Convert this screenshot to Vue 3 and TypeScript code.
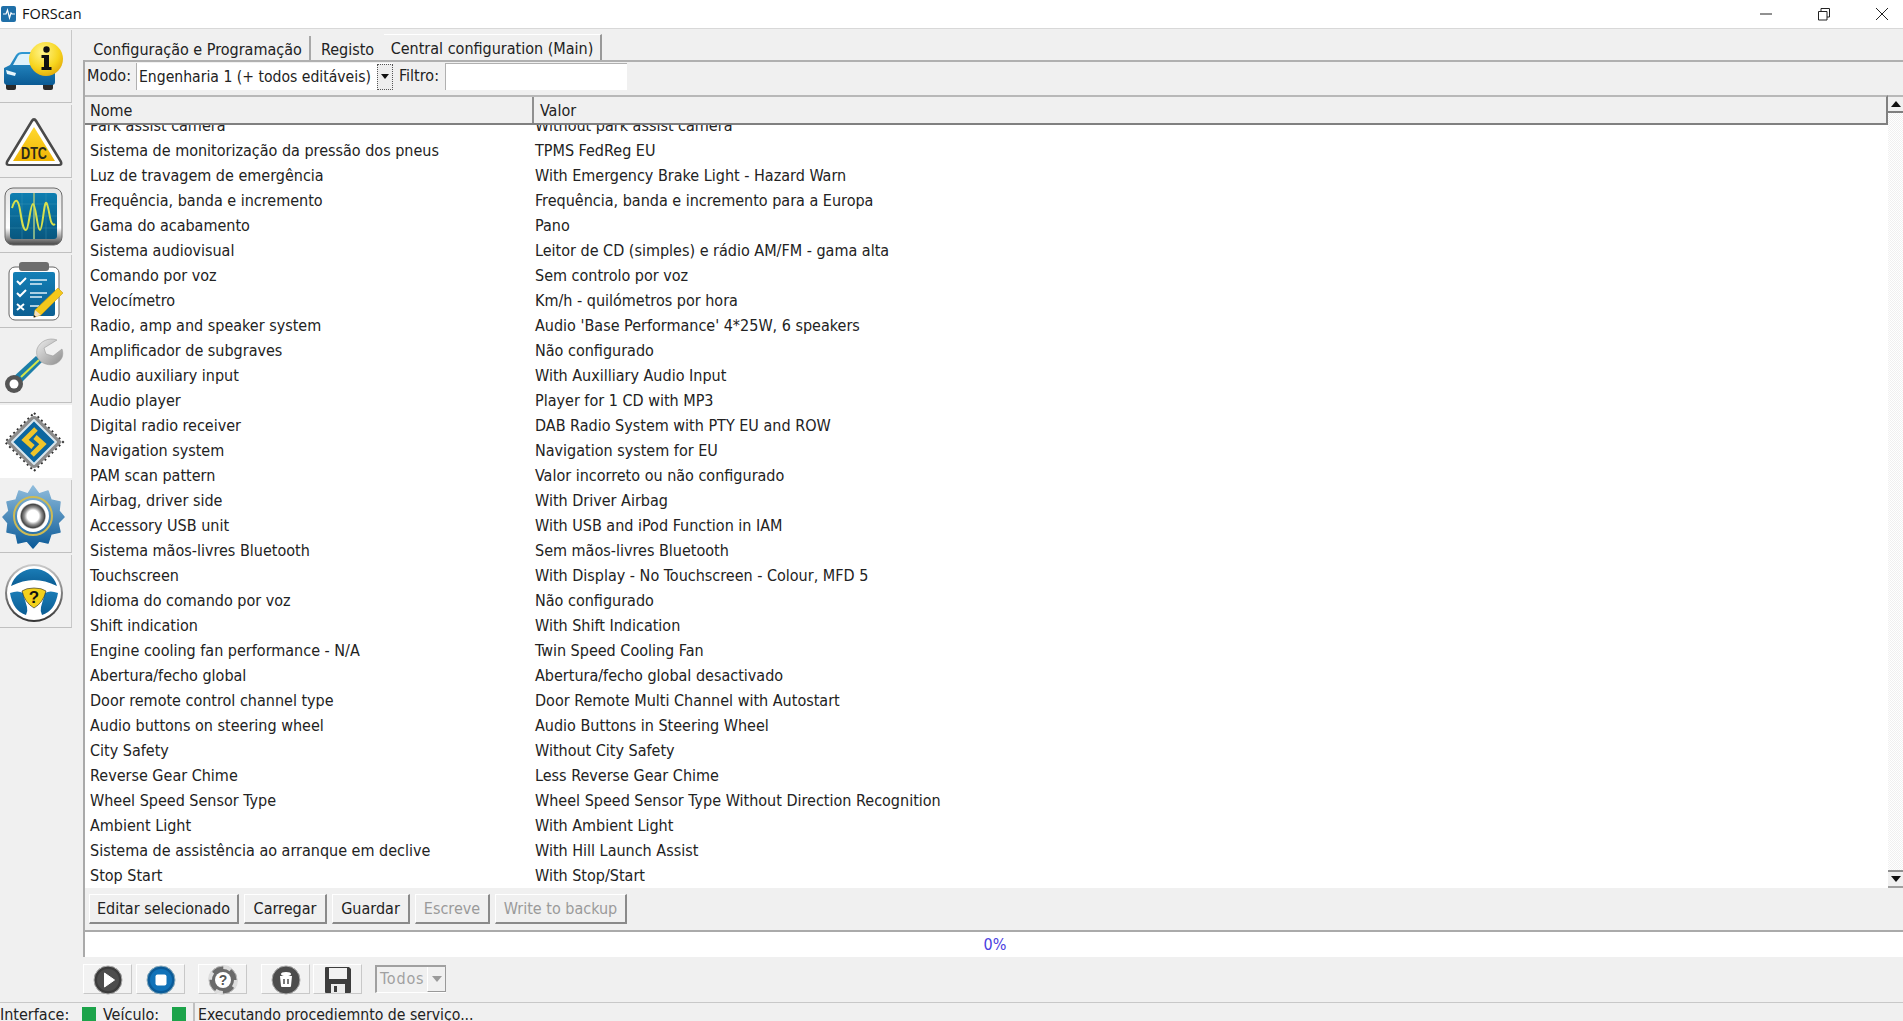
<script setup lang="ts">
interface Row { name: string; value: string }
const rows: Row[] = [
  { name: 'Park assist camera', value: 'Without park assist camera' },
  { name: 'Sistema de monitorização da pressão dos pneus', value: 'TPMS FedReg EU' },
  { name: 'Luz de travagem de emergência', value: 'With Emergency Brake Light - Hazard Warn' },
  { name: 'Frequência, banda e incremento', value: 'Frequência, banda e incremento para a Europa' },
  { name: 'Gama do acabamento', value: 'Pano' },
  { name: 'Sistema audiovisual', value: 'Leitor de CD (simples) e rádio AM/FM - gama alta' },
  { name: 'Comando por voz', value: 'Sem controlo por voz' },
  { name: 'Velocímetro', value: 'Km/h - quilómetros por hora' },
  { name: 'Radio, amp and speaker system', value: "Audio 'Base Performance' 4*25W, 6 speakers" },
  { name: 'Amplificador de subgraves', value: 'Não configurado' },
  { name: 'Audio auxiliary input', value: 'With Auxilliary Audio Input' },
  { name: 'Audio player', value: 'Player for 1 CD with MP3' },
  { name: 'Digital radio receiver', value: 'DAB Radio System with PTY EU and ROW' },
  { name: 'Navigation system', value: 'Navigation system for EU' },
  { name: 'PAM scan pattern', value: 'Valor incorreto ou não configurado' },
  { name: 'Airbag, driver side', value: 'With Driver Airbag' },
  { name: 'Accessory USB unit', value: 'With USB and iPod Function in IAM' },
  { name: 'Sistema mãos-livres Bluetooth', value: 'Sem mãos-livres Bluetooth' },
  { name: 'Touchscreen', value: 'With Display - No Touchscreen - Colour, MFD 5' },
  { name: 'Idioma do comando por voz', value: 'Não configurado' },
  { name: 'Shift indication', value: 'With Shift Indication' },
  { name: 'Engine cooling fan performance - N/A', value: 'Twin Speed Cooling Fan' },
  { name: 'Abertura/fecho global', value: 'Abertura/fecho global desactivado' },
  { name: 'Door remote control channel type', value: 'Door Remote Multi Channel with Autostart' },
  { name: 'Audio buttons on steering wheel', value: 'Audio Buttons in Steering Wheel' },
  { name: 'City Safety', value: 'Without City Safety' },
  { name: 'Reverse Gear Chime', value: 'Less Reverse Gear Chime' },
  { name: 'Wheel Speed Sensor Type', value: 'Wheel Speed Sensor Type Without Direction Recognition' },
  { name: 'Ambient Light', value: 'With Ambient Light' },
  { name: 'Sistema de assistência ao arranque em declive', value: 'With Hill Launch Assist' },
  { name: 'Stop Start', value: 'With Stop/Start' }
]
const actions = [
  { label: 'Editar selecionado', w: 150, off: false },
  { label: 'Carregar', w: 83, off: false },
  { label: 'Guardar', w: 78, off: false },
  { label: 'Escreve', w: 75, off: true },
  { label: 'Write to backup', w: 132, off: true }
]
</script>

<template>
  <div class="app">
    <header class="titlebar">
      <svg class="appicon" width="16" height="18" viewBox="0 0 16 18">
        <rect x="0" y="1" width="15" height="16" rx="2" fill="#1f6fa8" />
        <path d="M2 9h3l1.500-4 2 8 1.500-5 1 1h3" fill="none" stroke="#fff" stroke-width="1.200" />
      </svg>
      <span class="apptitle">FORScan</span>
      <div class="winctl">
        <svg width="14" height="14" viewBox="0 0 14 14"><path d="M1 7h12" stroke="#222" fill="none" /></svg>
        <svg width="14" height="14" viewBox="0 0 14 14"><path d="M1.500 4.500h8.500v8.500h-8.500zM4 4.500v-3h8.500v8.500h-2.500" stroke="#222" fill="none" /></svg>
        <svg width="14" height="14" viewBox="0 0 14 14"><path d="M1 1l12 12M13 1L1 13" stroke="#222" fill="none" /></svg>
      </div>
    </header>

    <div class="body">
      <aside class="sidebar">
        <div class="side">
          <svg width="71" height="73" viewBox="0 0 71 73">
            <defs>
              <linearGradient id="carb" x1="0" y1="0" x2="0" y2="1"><stop offset="0" stop-color="#2f9ad4" /><stop offset="1" stop-color="#0a5a94" /></linearGradient>
              <radialGradient id="infoy" cx=".4" cy=".3" r=".8"><stop offset="0" stop-color="#fff58a" /><stop offset=".6" stop-color="#f7d51e" /><stop offset="1" stop-color="#dd9f06" /></radialGradient>
            </defs>
            <rect x="6" y="50" width="10" height="10" rx="2" fill="#2a2a2a" />
            <rect x="43" y="50" width="10" height="10" rx="2" fill="#2a2a2a" />
            <path d="M4 38l6-3 6-10q2-3 6-3h16q4 0 6 3l6 10 5 3v14q0 3-3 3H8q-4 0-4-3z" fill="url(#carb)" />
            <path d="M13 35l5-9q1-2 4-2h14l6 11z" fill="#dff2fb" />
            <path d="M6 40l10 3-1 3-8-2z" fill="#e8f7fd" />
            <circle cx="46" cy="29" r="17" fill="url(#infoy)" />
            <circle cx="46.500" cy="19.500" r="3.200" fill="#111" />
            <path d="M41.500 25h7.500v12h2.500v3h-10v-3h2.500v-9h-2.500z" fill="#111" />
          </svg>
        </div>
        <div class="side">
          <svg width="71" height="73" viewBox="0 0 71 73">
            <defs>
              <linearGradient id="dtcy" x1="0" y1="0" x2="0" y2="1"><stop offset="0" stop-color="#ffd92f" /><stop offset="1" stop-color="#eeb404" /></linearGradient>
            </defs>
            <path d="M34 13q2 0 3 2l25 41q2 5-3 5H9q-5 0-3-5l25-41q1-2 3-2z" fill="#4a4a4a" />
            <path d="M34 17l25 41H9z" fill="#fff" stroke="#fff" stroke-width="2" stroke-linejoin="round" />
            <path d="M34 22l21 34H13z" fill="url(#dtcy)" />
            <text x="34" y="54" class="dtc" textLength="26" lengthAdjust="spacingAndGlyphs" text-anchor="middle">DTC</text>
          </svg>
        </div>
        <div class="side">
          <svg width="71" height="73" viewBox="0 0 71 73">
            <defs>
              <linearGradient id="frm" x1="0" y1="0" x2="0" y2="1"><stop offset="0" stop-color="#e2e2e2" /><stop offset=".7" stop-color="#fff" /><stop offset="1" stop-color="#444" /></linearGradient>
              <linearGradient id="scr" x1="0" y1="0" x2="0" y2="1"><stop offset="0" stop-color="#0d7eb1" /><stop offset="1" stop-color="#08577f" /></linearGradient>
            </defs>
            <rect x="5" y="8" width="57" height="57" rx="8" fill="url(#frm)" stroke="#6b6b6b" />
            <rect x="10" y="13" width="47" height="46" rx="3" fill="url(#scr)" />
            <path d="M10 24h47M10 36h47M10 48h47M22 13v46M46 13v46" stroke="#4aa0bd" stroke-width=".6" fill="none" opacity=".6" />
            <path d="M34 13v46" stroke="#7fb089" stroke-width="2" />
            <path d="M12 28c3-10 6-10 8 2s3 20 6 20 4-26 7-26 4 26 7 26 4-34 7-26 3 24 8 20" fill="none" stroke="#d7e04c" stroke-width="2" />
          </svg>
        </div>
        <div class="side">
          <svg width="71" height="73" viewBox="0 0 71 73">
            <defs>
              <linearGradient id="brd" x1="0" y1="0" x2="0" y2="1"><stop offset="0" stop-color="#137fb6" /><stop offset="1" stop-color="#0c5f92" /></linearGradient>
            </defs>
            <rect x="9" y="12" width="50" height="53" rx="6" fill="#fff" stroke="#666" />
            <rect x="13" y="17" width="42" height="44" rx="2" fill="url(#brd)" />
            <rect x="19" y="7" width="30" height="9" rx="3" fill="#6d6d6d" />
            <g fill="none" stroke="#dff0f8" stroke-width="1.400">
              <path d="M30 25h17M30 29h12M30 38h17M30 42h12M30 51h9" />
            </g>
            <g fill="none" stroke="#fff" stroke-width="2">
              <path d="M17 26l3 3 6-6M17 38l3 3 6-6M17 49l7 6M24 49l-7 6" />
            </g>
            <path d="M35 55l23-22 5 5-22 22-7 2z" fill="#f4c81c" stroke="#c99a08" stroke-width=".6" />
            <path d="M35 55l6 5-7 2z" fill="#f3e0c0" />
            <path d="M34 60l2 2-2.500 .600z" fill="#111" />
          </svg>
        </div>
        <div class="side">
          <svg width="71" height="73" viewBox="0 0 71 73">
            <defs>
              <linearGradient id="wr" x1="0" y1="0" x2="1" y2="1"><stop offset="0" stop-color="#eee" /><stop offset="1" stop-color="#8e8e8e" /></linearGradient>
            </defs>
            <path d="M36 26l6 6L18 56l-8-6z" fill="#1d7ea8" />
            <path d="M21 47l18-17" stroke="#d3e54a" stroke-width="2" />
            <circle cx="14" cy="54" r="9" fill="#555" />
            <circle cx="14" cy="54" r="4.500" fill="#fff" />
            <path d="M57 10c-8-3-17 1-20 9-1 5 0 9 3 12 5 4 12 5 17 2s7-8 5-14l-9 7-7-2-2-6z" fill="url(#wr)" stroke="#9a9a9a" stroke-width=".6" />
          </svg>
        </div>
        <div class="side active">
          <svg width="71" height="73" viewBox="0 0 71 73">
            <g stroke="#333" stroke-width="2" stroke-dasharray="2 3" fill="none">
              <path d="M34 8L63 37 34 66 5 37z" />
            </g>
            <path d="M34 11q2 0 3 1l24 24q1 1 0 2L37 62q-3 2-6 0L7 38q-1-1 0-2l24-24q1-1 3-1z" fill="#8c8c8c" />
            <path d="M34 15l22 22-22 22-22-22z" fill="#0c66a0" stroke="#d8e6ee" stroke-width="2" stroke-linejoin="round" />
            <path d="M36 24l-11 11 8 7M32 50l11-11-8-7" fill="none" stroke="#f0c52a" stroke-width="5" />
          </svg>
        </div>
        <div class="side">
          <svg width="71" height="73" viewBox="0 0 71 73">
            <defs>
              <linearGradient id="gr" x1="0" y1="0" x2="0" y2="1"><stop offset="0" stop-color="#8fbcdc" /><stop offset="1" stop-color="#0b5a98" /></linearGradient>
              <radialGradient id="hub" cx=".5" cy=".5" r=".5"><stop offset=".45" stop-color="#fff" /><stop offset=".65" stop-color="#999" /><stop offset=".9" stop-color="#444" /><stop offset="1" stop-color="#ddd" /></radialGradient>
            </defs>
            <path d="M33 6l6 8 9-3 3 9 9 2-1 9 5 6-6 6 2 9-9 2-3 9-9-2-6 7-6-7-9 2-2-9-9-2 1-9-5-6 6-6-2-9 9-2 3-9 9 3z" fill="url(#gr)" stroke="url(#gr)" stroke-width="1.500" stroke-linejoin="round" />
            <circle cx="33" cy="36" r="19" fill="none" stroke="#cdbb55" stroke-width="2" />
            <circle cx="33" cy="36" r="16" fill="#fff" />
            <circle cx="33" cy="36" r="13" fill="url(#hub)" />
          </svg>
        </div>
        <div class="side">
          <svg width="71" height="73" viewBox="0 0 71 73">
            <defs>
              <linearGradient id="rim" x1="0" y1="0" x2="0" y2="1"><stop offset="0" stop-color="#ccc" /><stop offset="1" stop-color="#333" /></linearGradient>
              <linearGradient id="sw" x1="0" y1="0" x2="0" y2="1"><stop offset="0" stop-color="#1a7cb6" /><stop offset="1" stop-color="#0b5d94" /></linearGradient>
            </defs>
            <circle cx="34" cy="38" r="29" fill="url(#rim)" />
            <circle cx="34" cy="38" r="27" fill="#fff" />
            <path d="M11 31a24 24 0 0 1 46 0q-12-6-23-6t-23 6z" fill="url(#sw)" />
            <path d="M10 38q8-3 13 0l4 14q1 4-1 8-13-4-16-22zM58 38q-8-3-13 0l-4 14q-1 4 1 8 13-4 16-22z" fill="url(#sw)" />
            <path d="M34 33q8 0 12 3-3 12-12 17-9-5-12-17 4-3 12-3z" fill="#f3d11c" stroke="#222" stroke-width=".6" />
            <text x="34" y="48" class="q" text-anchor="middle">?</text>
          </svg>
        </div>
      </aside>

      <main class="content">
        <nav class="tabs">
          <div class="tab first">Configuração e Programação</div>
          <div class="tab second">Registo</div>
          <div class="tab current">Central configuration (Main)</div>
        </nav>
        <div class="bordered">
          <div class="filters">
            <span class="lbl">Modo:</span>
            <div class="combo">
              <span class="combotext">Engenharia 1 (+ todos editáveis)</span>
              <span class="combobtn"><i class="tri down small"></i></span>
            </div>
            <span class="lbl filtro">Filtro:</span>
            <div class="input"></div>
          </div>
          <div class="tablewrap">
            <div class="table">
              <div class="thead">
                <div class="th name">Nome</div>
                <div class="th val">Valor</div>
              </div>
              <div class="tbody">
                <div class="rows">
                  <div v-for="r in rows" :key="r.name" class="row">
                    <span class="cname">{{ r.name }}</span>
                    <span class="cval">{{ r.value }}</span>
                  </div>
                </div>
              </div>
            </div>
            <div class="scroll">
              <div class="sbtn up"><i class="tri upw"></i></div>
              <div class="strack"></div>
              <div class="sbtn dn"><i class="tri down"></i></div>
            </div>
          </div>
          <div class="actions">
            <button v-for="a in actions" :key="a.label" class="act" :class="{ off: a.off }" :style="{ width: a.w + 'px' }">{{ a.label }}</button>
          </div>
          <div class="progress">0%</div>
        </div>
        <div class="toolbar">
          <div class="tool">
            <svg width="30" height="30" viewBox="0 0 30 30"><circle cx="15" cy="15" r="14" fill="#3c3c3c" stroke="#aaa" /><circle cx="15" cy="15" r="11" fill="#4d4d4d" /><path d="M11.500 8l10 7-10 7z" fill="#fff" stroke="#fff" stroke-linejoin="round" /></svg>
          </div>
          <div class="tool">
            <svg width="30" height="30" viewBox="0 0 30 30"><circle cx="15" cy="15" r="14" fill="#0b5b98" stroke="#8ab" /><circle cx="15" cy="15" r="11" fill="#1172b8" /><rect x="9.500" y="9.500" width="11" height="11" rx="2" fill="#fff" /></svg>
          </div>
          <div class="tool gap1">
            <svg width="30" height="30" viewBox="0 0 30 30"><circle cx="15" cy="15" r="14" fill="#6a6a6a" stroke="#bbb" /><circle cx="15" cy="15" r="13" fill="none" stroke="#ddd" stroke-width="4" stroke-dasharray="8 12.400" /><circle cx="15" cy="15" r="8" fill="#fff" /><text x="15" y="20" class="toolq" text-anchor="middle">?</text></svg>
          </div>
          <div class="tool gap2">
            <svg width="30" height="30" viewBox="0 0 30 30"><circle cx="15" cy="15" r="14" fill="#4c4c4c" stroke="#aaa" /><path d="M9 11h12l-1 10q0 1-1 1h-8q-1 0-1-1z" fill="#fff" /><ellipse cx="15" cy="9" rx="5" ry="2" fill="#fff" /><path d="M13 14v5M17 14v5" stroke="#4c4c4c" stroke-width="1.500" /></svg>
          </div>
          <div class="tool">
            <svg width="30" height="30" viewBox="0 0 30 30"><path d="M2 3q0-1 1-1h23l2 2v23q0 1-1 1H3q-1 0-1-1z" fill="#3d3d3d" /><rect x="6" y="3" width="18" height="11" fill="#f2f2f2" /><rect x="8" y="19" width="14" height="9" fill="#ececec" /><rect x="11" y="21" width="3" height="6" fill="#3d3d3d" /></svg>
          </div>
          <div class="todos">
            <span class="todostext">Todos</span>
            <span class="todosbtn"><i class="tri down grey"></i></span>
          </div>
        </div>
      </main>
    </div>

    <footer class="status">
      <span class="iface">Interface:</span>
      <i class="led"></i>
      <span class="vei">Veículo:</span>
      <i class="led"></i>
      <div class="msg">Executando procediemnto de serviço...</div>
    </footer>
  </div>
</template>

<style>
html, body { margin: 0; background: #f0f0f0; overflow: hidden; }
</style>

<style scoped>
.app {
  width: 1903px; height: 1021px; display: flex; flex-direction: column; overflow: hidden;
  background: #f0f0f0; color: #222;
  font-family: "DejaVu Sans", "Noto Sans", sans-serif; font-stretch: condensed; font-size: 16px; line-height: 20px;
}
.titlebar { height: 28px; flex: none; display: flex; align-items: center; background: #fff; border-bottom: 1px solid #d8d8d8; }
.appicon { margin-left: 1px; }
.apptitle { margin-left: 5px; font-family: "Open Sans", sans-serif; font-stretch: normal; font-size: 14.500px; color: #111; }
.winctl { margin-left: auto; display: flex; gap: 44px; padding-right: 14px; }
.body { flex: 1; display: flex; min-height: 0; }
.sidebar { width: 83px; flex: none; padding-top: 1px; box-sizing: border-box; }
.side { width: 71px; height: 72px; margin-bottom: 2px; border-right: 1px solid #c8c8c8; border-bottom: 1px solid #c0c0c0; overflow: hidden; }
.side.active { background: #fff; border-color: #fff; }
.side svg { display: block; }
.dtc { font: 700 17px "Liberation Sans Narrow", "Liberation Sans", sans-serif; fill: #2a2a1a; }
.q { font: 700 17px "Liberation Sans", sans-serif; fill: #111; }
.toolq { font: 700 14px "Liberation Sans", sans-serif; fill: #555; }
.content { flex: 1; min-width: 0; display: flex; flex-direction: column; }
.tabs { height: 31px; flex: none; display: flex; align-items: flex-end; padding-left: 3px; }
.tab { height: 24px; white-space: nowrap; box-sizing: border-box; padding-top: 4px; line-height: 20px; }
.tab.first { width: 225px; border-right: 2px solid #a8a8a8; text-align: center; }
.tab.second { width: 73px; text-align: center; }
.tab.current { width: 218px; height: 26px; padding-top: 4px; line-height: 20px; background: #f0f0f0; border-right: 2px solid #999; border-top: 1px solid #fff; text-align: center; }
.bordered { flex: 1; min-height: 0; display: flex; flex-direction: column; border-left: 2px solid #aaa; }
.filters { height: 35px; flex: none; box-sizing: border-box; border-top: 2px solid #b0b0b0; display: flex; align-items: flex-start; padding-left: 2px; padding-top: 1px; }
.lbl { width: 49px; line-height: 26px; white-space: nowrap; }
.combo { width: 257px; height: 27px; display: flex; align-items: center; background: #fff; border-left: 1px solid #b0b0b0; box-sizing: border-box; padding-left: 2px; }
.combotext { flex: 1; white-space: nowrap; font-size: 15.600px; }
.combobtn { width: 16px; height: 26px; display: flex; align-items: center; justify-content: center; background: #eee; border: 1px dotted #555; box-sizing: border-box; }
.lbl.filtro { width: 46px; margin-left: 6px; }
.input { width: 182px; height: 27px; background: #fff; border-left: 1px solid #b0b0b0; border-top: 1px solid #b0b0b0; box-sizing: border-box; }
.tablewrap { flex: 1; min-height: 0; display: flex; }
.table { flex: 1; min-width: 0; display: flex; flex-direction: column; background: #fff; }
.thead { height: 30px; flex: none; display: flex; box-sizing: border-box; background: #f0f0f0; border-top: 2px solid #b8b8b8; border-bottom: 2px solid #808080; border-right: 2px solid #808080; }
.th { line-height: 28px; padding-left: 5px; box-sizing: border-box; }
.th.name { width: 449px; border-right: 2px solid #909090; }
.th.val { flex: 1; padding-left: 6px; }
.tbody { flex: 1; min-height: 0; overflow: hidden; }
.rows { margin-top: -12px; }
.row { height: 25px; line-height: 25px; display: flex; white-space: nowrap; padding-left: 5px; }
.cname { width: 445px; flex: none; }
.scroll { width: 15px; flex: none; display: flex; flex-direction: column; }
.sbtn { height: 18px; flex: none; display: flex; align-items: center; justify-content: center; background: #f0f0f0; box-sizing: border-box; }
.sbtn.up { border-top: 2px solid #b8b8b8; border-bottom: 2px solid #808080; }
.sbtn.dn { border-top: 2px solid #909090; border-bottom: 2px solid #a0a0a0; }
.strack { flex: 1; background: repeating-conic-gradient(#f0f0f0 0 25%, #fff 0 50%) 0 0 / 2px 2px; }
.tri { display: block; width: 0; height: 0; border-left: 5px solid transparent; border-right: 5px solid transparent; }
.tri.upw { border-bottom: 6px solid #111; }
.tri.down { border-top: 6px solid #111; }
.tri.small { border-left-width: 4px; border-right-width: 4px; border-top-width: 5px; }
.tri.grey { border-top-color: #9a9a9a; }
.actions { height: 42px; flex: none; display: flex; align-items: center; padding: 0 0 0 4px; gap: 5px; box-sizing: border-box; }
.act { height: 30px; padding: 0; background: #f0f0f0; color: #222; font: inherit; border: none; border-top: 1px solid #fff; border-left: 1px solid #fff; border-right: 2px solid #8a8a8a; border-bottom: 2px solid #8a8a8a; white-space: nowrap; }
.act.off { color: #9a9a9a; }
.progress { height: 27px; flex: none; box-sizing: border-box; background: #fff; border-top: 2px solid #aaa; text-align: center; line-height: 25px; color: #4a3ee0; padding-left: 2px; }
.toolbar { height: 45px; flex: none; display: flex; align-items: center; padding-bottom: 2px; box-sizing: border-box; }
.tool { width: 49px; height: 30px; flex: none; display: flex; justify-content: center; background: #f2f2f2; border-right: 1px solid #c8c8c8; border-bottom: 1px solid #c8c8c8; border-top: 1px solid #fff; border-left: 1px solid #fff; box-sizing: border-box; margin-right: 4px; }
.tool.gap1 { margin-left: 9px; margin-right: 14px; }
.tool.gap2 { margin-right: 3px; }
.todos { width: 71px; height: 28px; margin-left: 9px; display: flex; box-sizing: border-box; border-top: 2px solid #a0a0a0; border-left: 2px solid #a0a0a0; border-bottom: 1px solid #fff; color: #a0a0a0; letter-spacing: .8px; }
.todostext { flex: 1; line-height: 24px; padding-left: 3px; }
.todosbtn { width: 17px; display: flex; align-items: center; justify-content: center; background: #f0f0f0; border-right: 1px solid #999; border-bottom: 1px solid #999; border-left: 1px solid #fff; }
.status { height: 19px; flex: none; display: flex; align-items: flex-start; overflow: hidden; border-top: 1px solid #c8c8c8; white-space: nowrap; box-sizing: border-box; line-height: 23px; }
.iface { width: 82px; flex: none; }
.led { width: 14px; height: 14px; flex: none; display: block; margin-top: 4px; background: #1ca34a; }
.vei { width: 76px; flex: none; padding-left: 7px; box-sizing: border-box; }
.msg { margin-left: 7px; padding-left: 3px; flex: 1; height: 19px; border-left: 2px solid #c0c0c0; font-size: 15.700px; }
</style>
